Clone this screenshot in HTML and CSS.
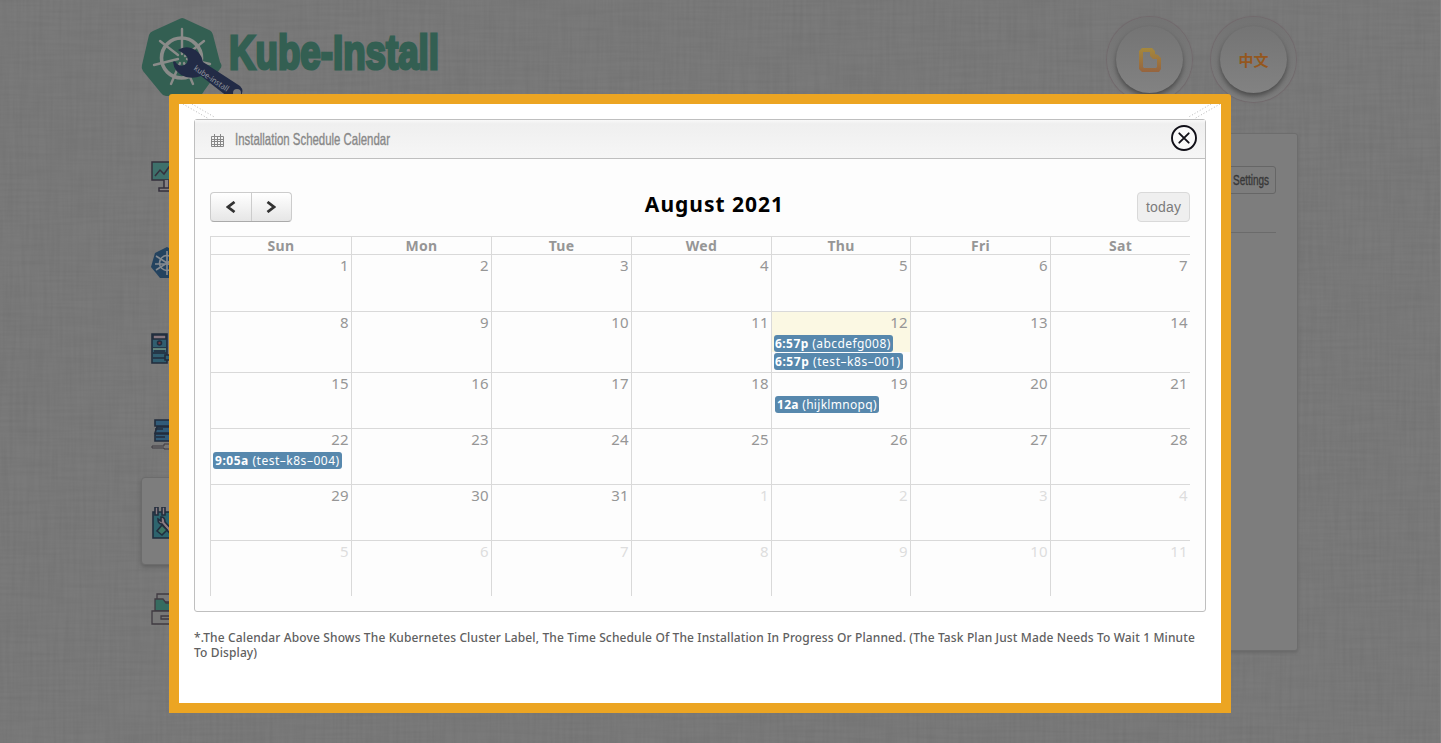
FILE: index.html
```html
<!DOCTYPE html>
<html lang="en">
<head>
<meta charset="utf-8">
<title>Kube-Install</title>
<link rel="stylesheet" href="styles.css">
</head>
<body>
<div class="page">
  <svg class="fabric" width="1441" height="743">
    <filter id="weft" x="0" y="0" width="100%" height="100%" color-interpolation-filters="sRGB"><feTurbulence type="fractalNoise" baseFrequency="0.018 0.3" numOctaves="2" seed="4"/><feColorMatrix values="0 0 0 0 0  0 0 0 0 0  0 0 0 0 0  0.12 0 0 0 -0.04"/></filter>
    <filter id="warp" x="0" y="0" width="100%" height="100%" color-interpolation-filters="sRGB"><feTurbulence type="fractalNoise" baseFrequency="0.3 0.018" numOctaves="2" seed="9"/><feColorMatrix values="0 0 0 0 0  0 0 0 0 0  0 0 0 0 0  0.12 0 0 0 -0.04"/></filter>
    <rect width="1441" height="743" filter="url(#weft)"/>
    <rect width="1441" height="743" filter="url(#warp)"/>
  </svg>

  <header class="top">
    <svg class="logo" width="310" height="84" viewBox="0 0 310 84">
      <path d="M39.500 4.500 Q41 3.500 43 4.500 L68 16 Q71 17 72 21 L79 48 Q82 52 79 55 L63 77 Q61 82 56 82 L25 82 Q22 82 20 79 L2 57 Q0 54 1 51 L8 21 Q9 18 12 17 Z" fill="#335f52"/>
      <g stroke="#8a8b89" fill="none" stroke-linecap="round">
        <circle cx="40.500" cy="44" r="20" stroke-width="3.600"/>
        <path stroke-width="2.400" d="M41 40V15M44 42L63 27M46 45L69 50M43 49L52 70M39 49L30 70M37 45L13 51M37 41L19 27"/>
      </g>
      <path d="M40 38L37 36Q43 32 50 34Q60 37 62 48L99 72Q104 77 99 83H87L60 62Q53 65 45 63Q33 59 32 48Q34 46 36 50Q41 54 46 49Q49 42 40 38Z" fill="#222b46"/>
      <circle cx="96" cy="79" r="4" fill="#777"/>
      <g transform="translate(54 53) rotate(34)"><text class="wrench-text" x="0" y="3" textLength="40" lengthAdjust="spacingAndGlyphs">kube-install</text></g>
      <text class="brand" x="88" y="54.500" textLength="210" lengthAdjust="spacingAndGlyphs">Kube-Install</text>
    </svg>
    <nav class="rounds">
      <a class="round"><svg width="24" height="26" viewBox="0 0 24 26"><defs><linearGradient id="amber" x1="0" y1="0" x2="0" y2="1"><stop offset="0" stop-color="#a5883c"/><stop offset="1" stop-color="#96643f"/></linearGradient></defs><path d="M4 1h10l3 3v3l3 1 3 3v11l-2 3H4l-3-3V4zM5 5v15l1 1h12l1-1v-8h-4l-3-3V5z" fill="url(#amber)" fill-rule="evenodd"/></svg></a>
      <a class="round lang">中文</a>
    </nav>
  </header>

  <div class="body-row">
    <nav class="side">
      <a class="tab"><svg width="32" height="32" viewBox="0 0 32 32"><g stroke="#35303d" stroke-width="1.500" fill="#3e706b"><path d="M1 1h30v18H1z"/><path d="M4 15l5-6 4 4 5-7 5 5" fill="none"/><path d="M13 19v8h5v-8M8 27h17v3H8z" fill="#858083"/></g></svg></a>
      <a class="tab"><svg width="32" height="32" viewBox="0 0 32 32"><path d="M16 0l12 6 3 13-8 12H9L0 20 4 6z" fill="#24435f"/><g stroke="#858a90" fill="none" stroke-width="1.600"><circle cx="16" cy="16" r="7.500"/><path d="M16 4v24M5 9l22 14M27 9L5 23M4 17h24"/></g></svg></a>
      <a class="tab"><svg width="32" height="32" viewBox="0 0 32 32"><g stroke="#222d3d" stroke-width="1.600" fill="#315e70"><path d="M1 1h15v29H1z"/><path d="M2 2h13v4H2z" fill="#85757e"/><path d="M2 15h13M2 20h13M2 25h13M3 18h11" /><path d="M2 16h13" stroke="#719184"/><circle cx="8.500" cy="10" r="2" fill="#74343d"/><path d="M14 22h6v5h-6z"/></g></svg></a>
      <a class="tab"><svg width="32" height="32" viewBox="0 0 32 32"><g stroke="#222d3d" stroke-width="1.600" fill="#315b78"><path d="M4 1h20v6H4zM6 8h18v6H4zM4 15h20v7H4z"/><path d="M4 10h8M5 18h9"/><path d="M1 27h12v-2h10v5H13v-1H1z" fill="#777" stroke="#403c42" stroke-width="1"/></g></svg></a>
      <a class="tab active"><svg width="32" height="32" viewBox="0 0 32 32"><g stroke="#222d3d" stroke-width="1.600" fill="#2e646e"><path d="M2 5h27v26H2z"/><path d="M4 0h3v8H4zM11 0h3v8h-3z" fill="#8b7b82"/><path d="M7 12q0 5 4 5l10 12 3-3-10-11q0-5-4-5v4z" fill="#8b7b82"/><path d="M6 24l5-6 5 5-5 5z" fill="#3d7564"/></g></svg></a>
      <a class="tab"><svg width="32" height="32" viewBox="0 0 32 32"><g stroke="#403b42" stroke-width="1.300" fill="#777"><path d="M6 1h22v8H6z"/><path d="M4 6h8l3 4h14v8H4z" fill="#366c60"/><path d="M1 18h30v13H1z"/><path d="M10 23h14v3H10z"/></g></svg></a>
    </nav>
    <main class="content">
      <div class="content-head"><a class="settings"><svg width="38" height="24"><text class="oswald dark" x="0" y="17" textLength="36" lengthAdjust="spacingAndGlyphs">Settings</text></svg></a></div>
    </main>
  </div>
</div>

<section class="modal">
  <svg class="corner left" width="32" height="16"><path d="M1 0L27 15M10 0L34 14"/></svg>
  <svg class="corner right" width="32" height="16"><path d="M31 0L5 15M22 0L-2 14"/></svg>
  <div class="panel">
    <div class="panel-head">
      <svg class="cal-icon" width="13" height="13" viewBox="0 0 13 13"><path d="M.5 2.500h12v10H.5zM.5 5.500h12M.5 7.500h12M.5 10.500h12M3.500 3v9M6.500 3v9M9.500 3v9M3.500 0v2M9.500 0v2" fill="none" stroke="#888"/></svg>
      <svg class="panel-title" width="160" height="26"><text class="oswald" x="0" y="19" textLength="155" lengthAdjust="spacingAndGlyphs">Installation Schedule Calendar</text></svg>
      <svg class="close" width="26" height="26" viewBox="0 0 26 26"><g fill="none" stroke="#111018" stroke-width="1.900" stroke-linecap="round"><circle cx="13" cy="13" r="12" fill="#fafafa"/><path d="M8.300 8.300l9.400 9.400M17.700 8.300l-9.400 9.400"/></g></svg>
    </div>
    <div class="toolbar">
      <div class="arrows">
        <button><svg width="10" height="12" viewBox="0 0 10 12"><path d="M8.500 1L2 6l6.500 5"/></svg></button>
        <button><svg width="10" height="12" viewBox="0 0 10 12"><path d="M1.500 1L8 6l-6.500 5"/></svg></button>
      </div>
      <h2>August 2021</h2>
      <button class="today">today</button>
    </div>
    <div class="grid">
      <div class="dow">Sun</div><div class="dow">Mon</div><div class="dow">Tue</div><div class="dow">Wed</div><div class="dow">Thu</div><div class="dow">Fri</div><div class="dow">Sat</div>
      <div class="day">1</div><div class="day">2</div><div class="day">3</div><div class="day">4</div><div class="day">5</div><div class="day">6</div><div class="day">7</div>
      <div class="day">8</div><div class="day">9</div><div class="day">10</div><div class="day">11</div>
      <div class="day now">12<div class="events"><span class="event e1"><b>6:57p</b> (abcdefg008)</span><span class="event e2"><b>6:57p</b> (test–k8s–001)</span></div></div>
      <div class="day">13</div><div class="day">14</div>
      <div class="day">15</div><div class="day">16</div><div class="day">17</div><div class="day">18</div>
      <div class="day">19<div class="events"><span class="event e3"><b>12a</b> (hijklmnopq)</span></div></div>
      <div class="day">20</div><div class="day">21</div>
      <div class="day">22<div class="events"><span class="event e4"><b>9:05a</b> (test–k8s–004)</span></div></div>
      <div class="day">23</div><div class="day">24</div><div class="day">25</div><div class="day">26</div><div class="day">27</div><div class="day">28</div>
      <div class="day">29</div><div class="day">30</div><div class="day">31</div><div class="day other">1</div><div class="day other">2</div><div class="day other">3</div><div class="day other">4</div>
      <div class="day other">5</div><div class="day other">6</div><div class="day other">7</div><div class="day other">8</div><div class="day other">9</div><div class="day other">10</div><div class="day other">11</div>
    </div>
  </div>
  <p class="note">*.The Calendar Above Shows The Kubernetes Cluster Label, The Time Schedule Of The Installation In Progress Or Planned. (The Task Plan Just Made Needs To Wait 1 Minute<br>To Display)</p>
</section>
</body>
</html>
```
FILE: styles.css
```css
* { box-sizing: border-box; }
body { margin: 0; width: 1441px; height: 743px; overflow: hidden; background: #7a7a7a; font-family: "Noto Sans", sans-serif; }
.page { height: 743px; padding: 14px 143px 0 141px; border-right: 1px solid #858585; }
.fabric { position: absolute; left: 0; top: 0; z-index: -1; opacity: .5; }
.top { display: flex; justify-content: space-between; height: 119px; }
.logo { display: block; overflow: visible; }
.brand { font: bold 49px "Liberation Sans", sans-serif; fill: #335f52; stroke: #335f52; stroke-width: 3px; }
.wrench-text { font: 8px "Noto Sans", sans-serif; fill: #8d929c; }
.rounds { display: flex; gap: 19px; padding: 3px 1px 0 0; }
.round { display: flex; align-items: center; justify-content: center; width: 85px; height: 85px; border: 9px solid transparent; border-radius: 50%; background: linear-gradient(#747474, #828282) padding-box, linear-gradient(#737373, #7c7c7c) border-box; box-shadow: 0 0 1px 1px #71696c; position: relative; }
.round::before { content: ""; position: absolute; inset: 0; border-radius: 50%; box-shadow: 0 3px 5px #4a4a4a; }
.lang { font: bold 15px "Noto Sans CJK SC", sans-serif; color: #94571e; }
.body-row { display: flex; margin-right: -1px; }
.side { width: 190px; }
.tab { display: flex; align-items: center; height: 86px; padding-left: 10px; position: relative; top: 1px; }
.tab.active { height: 88px; padding: 4px 0 0 9px; border: 1px solid #6c6c6c; border-radius: 4px; background: #7d7d7d; box-shadow: 0 2px 4px #5f5f5f; top: 0; }
.content { flex: 1; height: 518px; padding: 32px 21px 0; border: 1px solid #6d6d6d; border-radius: 3px; background: #7d7d7d; box-shadow: 0 2px 3px #696969; }
.content-head { display: flex; justify-content: flex-end; height: 67px; border-bottom: 1px solid #6b6b6b; }
.settings { display: flex; justify-content: flex-end; align-items: center; width: 80px; height: 28px; padding-right: 4px; border: 1px solid #666; border-radius: 3px; }
.settings svg, .panel-title { overflow: visible; }
.oswald { font: 16.5px "Liberation Sans Narrow", "Liberation Sans", sans-serif; fill: #888; stroke: #888; stroke-width: .35px; }
.oswald.dark { font-size: 14px; fill: #383838; stroke: #383838; }

.modal { position: absolute; left: 169px; top: 94px; width: 1062px; height: 619px; padding: 15px; border: 10px solid #eca522; background: #fff; border-radius: 3px 3px 0 0; }
.corner { position: absolute; top: 0; fill: none; stroke: #999; stroke-dasharray: 1 2; stroke-width: .7; }
.corner.left { left: 3px; }
.corner.right { right: 0; }
.panel { position: relative; height: 493px; border: 1px solid #bfbfbf; border-radius: 3px; background: #fdfdfd; }
.panel-head { display: flex; align-items: center; height: 39px; padding: 0 8px 0 16px; border-bottom: 1px solid #bfbfbf; background: linear-gradient(#f9f9f9 0, #efefef 4px, #f6f6f6 100%); }
.cal-icon { margin-top: 3px; }
.panel-title { margin: 0 auto 0 11px; }
.close { margin-top: -2px; }
.toolbar { display: grid; grid-template-columns: 82px 1fr 53px; height: 77px; padding: 33px 15px 0; }
.arrows { display: flex; height: 30px; border: 1px solid #ccc; border-bottom-color: #aaa; border-radius: 4px; background: linear-gradient(#fff, #e6e6e6); overflow: hidden; }
.arrows button { flex: 1; padding: 0; border: 0; background: none; }
.arrows button:first-child { border-right: 1px solid #ccc; }
.arrows svg { display: block; margin: 0 auto; fill: none; stroke: #333; stroke-width: 2.8; }
h2 { margin: -2px 0 0; text-align: center; font: bold 21px/28px "Noto Sans", sans-serif; letter-spacing: 1px; color: #000; }
.today { height: 30px; padding: 0; border: 1px solid #d9d9d9; border-radius: 4px; background: #efefef; font: 14px "Liberation Sans", sans-serif; color: #7b7b7b; letter-spacing: .2px; }
.grid { display: grid; grid-template-columns: 141px 140px 140px 140px 139px 140px 140px; grid-template-rows: 18px 57px 61px 56px 56px 56px 56px; width: 980px; margin-left: 15px; color: #969696; }
.dow, .day { border-left: 1px solid #d9d9d9; border-top: 1px solid #d9d9d9; }
.dow { text-align: center; font-weight: bold; font-size: 14px; line-height: 18px; letter-spacing: .3px; }
.day { padding: 1px 2px 0 0; text-align: right; font-size: 15px; line-height: 19px; letter-spacing: .3px; }
.now { background: linear-gradient(#fbf8e3 40px, #fdfdfd 40px); }
.other { color: #ddd; }
.events { display: flex; flex-direction: column; align-items: flex-start; gap: 1px; padding: 3px 0 0 2px; }
.event { height: 17px; border-radius: 3px; background: #5788ad; color: #fff; text-align: left; font-size: 12px; line-height: 17px; padding-left: 1px; white-space: nowrap; }
.e1 { width: 119px; letter-spacing: .43px; }
.e2 { width: 129px; letter-spacing: .55px; }
.e3 { width: 104px; margin-left: 1px; padding-left: 2px; letter-spacing: .3px; }
.e4 { width: 129px; padding-left: 2px; letter-spacing: .52px; }
.note { margin: 18px 0 0; color: #606060; font-size: 12px; line-height: 15px; font-weight: 500; letter-spacing: .125px; white-space: nowrap; }
```
